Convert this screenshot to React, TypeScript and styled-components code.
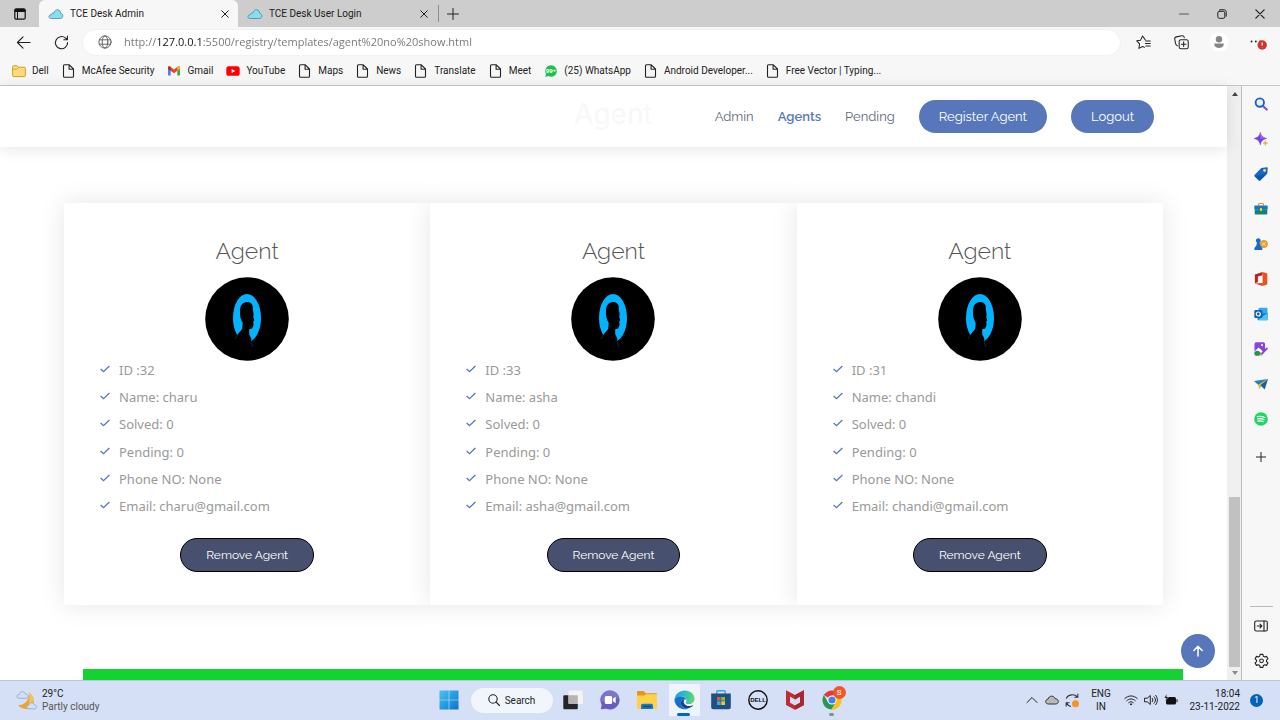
import React from "react";
import styled, { createGlobalStyle, css } from "styled-components";

const ui = 'Roboto, "Open Sans", sans-serif';
const heading = 'Raleway, Lato, sans-serif';
const blue = "#5777ba";

const GlobalStyle = createGlobalStyle`
  *, *::before, *::after { box-sizing: border-box; }
  body { margin: 0; font-family: "Open Sans", sans-serif; background: #fff; }
  button { font: inherit; color: inherit; background: none; border: 0; padding: 0; cursor: pointer; }
  a { color: inherit; text-decoration: none; }
  svg { display: block; flex: none; }
`;

const Desktop = styled.div`
  min-height: 100vh;
  display: flex;
  flex-direction: column;
`;

/* ---------- browser chrome ---------- */

const TabStrip = styled.div`
  display: flex;
  height: 27px;
  padding-right: 1px;
  background: #cdcdcd;
  color: #1b1b1b;
  font: 10px/14px ${ui};
`;

const TabActions = styled.button`
  width: 39px;
  display: grid;
  place-items: center;
`;

const Tab = styled.div<{ $active?: boolean }>`
  flex: 0 1 199px;
  display: flex;
  align-items: center;
  gap: 6px;
  padding: 0 9px;
  border-radius: 6px 6px 0 0;
  background: ${(p) => (p.$active ? "#f7f7f7" : "transparent")};
`;

const TabTitle = styled.span`
  flex: 1;
  white-space: nowrap;
`;

const NewTab = styled.button`
  display: flex;
  align-items: center;
  gap: 8px;
  padding-left: 1px;
  &::before {
    content: "";
    width: 1px;
    height: 17px;
    background: #8c8c8c;
  }
`;

const WindowButtons = styled.div`
  margin-left: auto;
  display: flex;
`;

const WindowButton = styled.button`
  width: 38px;
  display: grid;
  place-items: center;
`;

const Toolbar = styled.div`
  display: flex;
  align-items: center;
  height: 30px;
  padding: 0 4px;
  background: #f7f7f7;
`;

const ToolButton = styled.button`
  width: 38px;
  height: 28px;
  display: grid;
  place-items: center;
`;

const AddressBar = styled.label`
  flex: 1;
  display: flex;
  align-items: center;
  gap: 12px;
  height: 25px;
  margin: 0 4px 0 3px;
  padding: 0 15px;
  border-radius: 13px;
  background: #fff;
  box-shadow: 0 0 2px rgba(0, 0, 0, 0.08);
`;

const AddressInput = styled.input`
  flex: 1;
  min-width: 0;
  border: 0;
  padding: 0;
  outline: 0;
  font: 11px/18px "Open Sans", sans-serif;
  color: #747474;
  -webkit-text-fill-color: transparent;
  background: linear-gradient(90deg, #747474 34px, #111 34px, #111 79px, #747474 79px);
  background-clip: text;
  -webkit-background-clip: text;
`;

const Bookmarks = styled.nav`
  display: flex;
  align-items: center;
  gap: 13px;
  height: 28px;
  padding: 0 0 1px 12px;
  background: #f7f7f7;
  font: 10px/14px ${ui};
  color: #222;
`;

const Bookmark = styled.a`
  display: flex;
  align-items: center;
  gap: 6px;
  white-space: nowrap;
`;

/* ---------- page area ---------- */

const Workspace = styled.div`
  flex: 1;
  display: flex;
  border-top: 1px solid #c6c6c6;
  background: #f7f7f7;
`;

const Page = styled.main`
  position: relative;
  flex: 1;
  min-width: 0;
  display: flex;
  flex-direction: column;
  background: #fff;
`;

const SiteHeader = styled.header`
  display: flex;
  align-items: center;
  justify-content: flex-end;
  height: 61px;
  padding-right: 73px;
  box-shadow: 0 2px 15px rgba(0, 0, 0, 0.1);
`;

const SectionTitle = styled.h2`
  margin: 0 62px 6px 0;
  font: 400 28px/32px Inter, sans-serif;
  color: #f7f8fa;
`;

const SiteNav = styled.nav`
  display: flex;
  align-items: center;
  gap: 24px;
  font: 13px/18px ${heading};
  color: #5f687b;
`;

const NavLink = styled.a<{ $active?: boolean }>`
  ${(p) => p.$active && css`color: ${blue}; font-weight: 600;`}
`;

const Pill = styled.a`
  display: grid;
  place-items: center;
  height: 33px;
  padding: 0 20px;
  border-radius: 17px;
  background: ${blue};
  color: #fff;
`;

const Agents = styled.section`
  display: grid;
  grid-template-columns: repeat(3, 1fr);
  padding: 56px 64px 64px;
`;

const Card = styled.article`
  display: flex;
  flex-direction: column;
  align-items: center;
  padding: 33px 36px;
  background: #fff;
  box-shadow: 0 0 25px rgba(0, 0, 0, 0.1);
`;

const CardTitle = styled.h3`
  margin: 0 0 11px;
  font: 300 23px/30px ${heading};
  color: #555;
`;

const Facts = styled.ul`
  align-self: stretch;
  display: flex;
  flex-direction: column;
  justify-content: space-between;
  min-height: 154px;
  margin: 0 0 23px;
  padding: 0;
  list-style: none;
  font: 13px/18px "Noto Sans", sans-serif;
  color: #999;
`;

const Fact = styled.li`
  display: flex;
  align-items: center;
  gap: 9px;
`;

const RemoveButton = styled.button`
  height: 34px;
  padding: 0 25px;
  border: 1px solid #000;
  border-radius: 17px;
  background: #47516f;
  color: #fff;
  font: 400 12px/18px ${heading};
`;

const Banner = styled.div`
  flex: 1;
  min-height: 11px;
  margin: 0 44px 0 83px;
  background: #15d233;
`;

const BackToTop = styled.a`
  position: absolute;
  right: 12px;
  bottom: 12px;
  width: 34px;
  height: 34px;
  display: grid;
  place-items: center;
  border-radius: 50%;
  background: ${blue};
`;

const Scrollbar = styled.div`
  width: 15px;
  display: flex;
  flex-direction: column;
  align-items: center;
  justify-content: space-between;
  padding: 6px 1px 5px 2px;
  background: #f0f0f0;
  border-right: 1px solid #bdbdbd;
`;

const Thumb = styled.div`
  width: 11px;
  height: 170px;
  margin: auto 0 4px;
  background: #c1c1c1;
`;

const Sidebar = styled.aside`
  width: 38px;
  display: flex;
  flex-direction: column;
  padding-bottom: 2px;
`;

const SideApps = styled.nav`
  display: flex;
  flex-direction: column;
  padding-bottom: 3px;
`;

const SideButton = styled.button`
  height: 35px;
  display: grid;
  place-items: center;
`;

const SideRule = styled.hr`
  width: 23px;
  margin: auto auto 1px;
  border: 0;
  border-top: 1px solid #bbb;
`;

/* ---------- taskbar ---------- */

const Taskbar = styled.footer`
  display: grid;
  grid-template-columns: 1fr auto 1fr;
  height: 40px;
  padding-bottom: 1px;
  border-top: 1px solid #b9c3da;
  background: #d5dff5;
  font: 10px/13px ${ui};
  color: #222;
`;

const Weather = styled.button`
  display: flex;
  align-items: center;
  gap: 5px;
  padding-left: 16px;
  text-align: left;
`;

const Muted = styled.span`
  display: block;
  color: #555;
`;

const Apps = styled.div`
  display: flex;
  align-items: center;
  padding-left: 1px;
`;

const AppButton = styled.button<{ $current?: boolean }>`
  position: relative;
  width: 37px;
  height: 38px;
  display: grid;
  place-items: center;
  ${(p) =>
    p.$current &&
    css`
      background: linear-gradient(#eef3fc, #eef3fc) center / 31px 32px no-repeat;
    `}
`;

const Running = styled.i<{ $wide?: boolean }>`
  position: absolute;
  bottom: 3px;
  left: calc(50% - ${(p) => (p.$wide ? "7px" : "3px")});
  width: ${(p) => (p.$wide ? "13px" : "5px")};
  height: 3px;
  border-radius: 2px;
  background: ${(p) => (p.$wide ? "#0067c0" : "#858a94")};
`;

const CountBadge = styled.span`
  position: absolute;
  right: 5px;
  top: 5px;
  width: 13px;
  height: 13px;
  border-radius: 50%;
  background: #f0562b;
  color: #fff;
  font: 8px/13px ${ui};
`;

const SearchButton = styled.button`
  display: flex;
  align-items: center;
  justify-content: center;
  gap: 5px;
  width: 82px;
  height: 25px;
  margin: 0 2px 0 3px;
  border-radius: 13px;
  background: #f1f5fc;
`;

const Tray = styled.div`
  display: flex;
  align-items: center;
  justify-content: flex-end;
  padding-right: 17px;
`;

const TrayButton = styled.button`
  width: 20px;
  height: 28px;
  display: grid;
  place-items: center;
`;

const Language = styled.button`
  width: 38px;
  margin-right: 1px;
`;

const Clock = styled.button`
  width: 59px;
  text-align: right;
`;

const Notice = styled.span`
  width: 13px;
  height: 13px;
  margin-left: 10px;
  border-radius: 50%;
  background: #0063b8;
  color: #fff;
  text-align: center;
  font: 9px/13px ${ui};
`;

/* ---------- drawings ---------- */

type LineProps = { size?: number; w?: number; color?: string; box?: number; children: React.ReactNode };

const Line = ({ size = 16, w = 1, color = "#222", box = 16, children }: LineProps) => (
  <svg width={size} height={size} viewBox={`0 0 ${box} ${box}`} fill="none" stroke={color} strokeWidth={w} strokeLinecap="round" strokeLinejoin="round" aria-hidden>
    {children}
  </svg>
);

const CloudIcon = () => (
  <svg width="16" height="12" viewBox="0 0 16 12" aria-hidden>
    <path d="M3.2 10.5C1.4 10.5.8 9.3 1 8.3c.2-1 1.200-1.600 2.200-1.500C3.300 5.500 4.800 4.600 6 5.100 6.500 2.600 8 1.500 9.800 1.800c2 .3 2.900 1.900 2.800 3.400 1.700.3 2.500 1.700 2.200 3.100-.3 1.400-1.200 2.200-2.600 2.200Z" fill="#86def2" stroke="#4b8b9e" strokeWidth=".8" />
  </svg>
);

const CloseIcon = ({ size = 8 }: { size?: number }) => (
  <Line size={size} box={8} w={1}><path d="M.7.7l6.600 6.600M7.300.7.7 7.300" /></Line>
);

const DocIcon = () => (
  <svg width="14" height="14" viewBox="0 0 14 14" fill="none" stroke="#222" strokeWidth="1.100" strokeLinejoin="round" aria-hidden>
    <path d="M2.500.8h4.800L11.500 5v7.200c0 .6-.4 1-1 1h-8c-.6 0-1-.4-1-1V1.800c0-.6.4-1 1-1ZM7.100 1v4.200h4.400" />
  </svg>
);

const FolderIcon = () => (
  <svg width="14" height="14" viewBox="0 0 14 14" aria-hidden>
    <path d="M.6 3c0-.8.5-1.300 1.200-1.300h3l1.600 1.500h5.800c.7 0 1.200.5 1.200 1.200v7c0 .8-.5 1.200-1.200 1.200H1.800c-.7 0-1.200-.4-1.200-1.200Z" fill="#ffdc7a" stroke="#c99616" strokeWidth=".9" />
    <path d="M.8 5.200h4l1.500-1.500" fill="none" stroke="#c99616" strokeWidth=".8" />
  </svg>
);

const GmailIcon = () => (
  <svg width="14" height="14" viewBox="0 0 14 14" aria-hidden>
    <path d="M1 4v7.500h2.700V6Z" fill="#4285f4" />
    <path d="M13 4v7.500h-2.700V6Z" fill="#34a853" />
    <path d="M1 3.800C1 2.400 2.500 2 3.400 2.700L7 5.500l3.600-2.800C11.500 2 13 2.400 13 3.800v1L7 9.200 1 4.800Z" fill="#ea4335" />
    <path d="M10.300 3v3.800L13 4.800v-1C13 2.400 11.300 2.200 10.300 3Z" fill="#fbbc04" />
    <path d="M3.700 3v3.800L1 4.800v-1C1 2.400 2.700 2.200 3.700 3Z" fill="#c5221f" />
  </svg>
);

const YoutubeIcon = () => (
  <svg width="14" height="14" viewBox="0 0 14 14" aria-hidden>
    <rect x=".3" y="2.200" width="13.400" height="9.600" rx="2.600" fill="#f00" />
    <path d="M5.700 5v4l3.500-2Z" fill="#fff" />
  </svg>
);

const WhatsappIcon = () => (
  <svg width="14" height="14" viewBox="0 0 14 14" aria-hidden>
    <path d="M7 1.200a5.800 5.800 0 1 1-2.700 10.900L1.200 13l.8-3A5.800 5.800 0 0 1 7 1.200Z" fill="#1fc04d" />
    <text x="7" y="9.200" fontSize="6" fontWeight="700" fontFamily="Open Sans" fill="#fff" textAnchor="middle">99+</text>
  </svg>
);

const Avatar = () => (
  <svg width="84" height="84" viewBox="0 0 84 84" role="img" aria-label="Agent photo">
    <circle cx="42" cy="42" r="41.800" fill="#000" />
    <ellipse cx="42" cy="41" rx="14" ry="24" fill="#03b3ff" />
    <path d="M35 35c-.5-6 2.500-10 7.500-10 4.500 0 5.800 4 5.300 7l.8 5-.3 3 1 3.200-1 1 .2 4-1.300 3.200-3 .8v5l2.200 4.500-.7 3.500 1.800 4.800L44 74H22l4.500-12 5.200-3.500 5.500-6.500.5-6C36 43 34.700 39 35 35Z" fill="#000" />
    <path d="m30 62 2-3.500M46 64l1.800 6" stroke="#063a78" strokeWidth=".7" />
  </svg>
);

const CheckIcon = () => (
  <svg width="10" height="10" viewBox="0 0 10 10" fill="none" stroke={blue} strokeWidth="1.300" aria-hidden>
    <path d="M.6 4 3.500 6.700 9.400 1" />
  </svg>
);

const sideIcons: { name: string; art: React.ReactNode }[] = [
  {
    name: "Search",
    art: (
      <>
        <path d="m9 9 3.700 3.500" stroke="#8457d8" strokeWidth="2.400" strokeLinecap="round" />
        <circle cx="5.800" cy="5.600" r="4.200" fill="#e3f3ff" stroke="#1b62c4" strokeWidth="1.900" />
      </>
    ),
  },
  {
    name: "Discover",
    art: (
      <>
        <path d="M6.300.2C7.300 4 8.500 5.300 12.800 6.500 8.500 7.700 7.300 9 6.300 13 5.300 9 4.200 7.700 0 6.500 4.200 5.300 5.300 4 6.300.2Z" fill="#7440e8" stroke="#7440e8" strokeWidth=".4" />
        <path d="M6.300.4C7.100 4 8.200 5.300 12.400 6.500L6.300 6.500Z" fill="#b15df0" />
        <path d="M11.300 8.600c.4 1.700.8 2.100 2.500 2.500-1.700.5-2.100.9-2.500 2.600-.4-1.700-.8-2.100-2.500-2.600 1.700-.4 2.100-.8 2.500-2.500Z" fill="#edac22" stroke="#edac22" strokeWidth=".4" />
      </>
    ),
  },
  {
    name: "Shopping",
    art: (
      <>
        <path d="M.5 8 7.300.9 12.700.3c.7 0 1 .3 1 1L13.300 6.500l-7 6.900c-.6.5-1.200.4-1.700-.1L.5 9.300c-.4-.5-.4-.9 0-1.300Z" fill="#1768c5" />
        <path d="M.5 9.200 13.300 6.400l-7 7c-.6.5-1.200.4-1.700-.1Z" fill="#0e4999" opacity=".6" />
        <circle cx="10.600" cy="3.500" r="1.400" fill="#f4d86a" />
      </>
    ),
  },
  {
    name: "Tools",
    art: (
      <>
        <path d="M4.500 3.800V2.500c0-.7.4-1 1-1h3c.6 0 1 .3 1 1v1.300" fill="none" stroke="#c99b28" strokeWidth="1.100" />
        <rect x=".3" y="3.600" width="13.400" height="4" rx=".8" fill="#1774c8" />
        <path d="M.7 7.300h12.600v4.200c0 .6-.4 1-1 1H1.700c-.6 0-1-.4-1-1Z" fill="#16836e" />
        <rect x="6" y="6" width="2" height="3" rx=".5" fill="#f4cd46" />
      </>
    ),
  },
  {
    name: "Games",
    art: (
      <>
        <circle cx="9.900" cy="7" r="4" fill="#e3a12e" />
        <path d="m8 5.500 3.500 3m0-3-3.500 3" stroke="#fff0ad" strokeWidth=".8" />
        <path d="M4.200 1.200a2.300 2.300 0 0 1 1.500 4.200l.6 3.200 2 2.500V13H.4v-1.900l2-2.500L2.900 5.400a2.300 2.300 0 0 1 1.300-4.200Z" fill="#176ac6" />
      </>
    ),
  },
  {
    name: "Office",
    art: (
      <>
        <path d="M8.600 0 .9 2.600v8.800l3-1.400V4.400l4.700-1.200Z" fill="#b7251b" />
        <path d="m8.600 0 4.700 1.400v11.200L8.600 14Z" fill="#f0501f" />
        <path d="M8.600 14 .9 11.400l7.700-.5Z" fill="#d43c20" />
      </>
    ),
  },
  {
    name: "Outlook",
    art: (
      <>
        <rect x="4.500" y=".8" width="9" height="9" rx="1" fill="#36a9ee" />
        <path d="M3.500 6.500 13.600 6v6.200c0 .6-.4 1-1 1H4.500c-.6 0-1-.4-1-1Z" fill="#1381d4" />
        <path d="M4 12.900 13.600 6v6.200c0 .6-.4 1-1 1Z" fill="#54c5f2" />
        <rect x=".3" y="3" width="8" height="8" rx="1" fill="#0b63b7" />
        <circle cx="4.300" cy="7" r="2" fill="none" stroke="#fff" strokeWidth="1.200" />
      </>
    ),
  },
  {
    name: "Image editor",
    art: (
      <>
        <rect x=".5" y=".3" width="10.500" height="10" rx="1.500" fill="#8b43dc" />
        <path d="M.5 9.600 4.600 5.600l4.400 4L6.500 11Z" fill="#fff" />
        <path d="M.3 10.400c2.700-2.800 4.700-2 7.200 1.200L5 13.700H2c-1.200 0-1.700-1-1.700-3.300Z" fill="#1d9659" />
        <circle cx="8" cy="3" r="1" fill="#fff" />
        <path d="m6.500 12 6.200-6.800 1.300 1.200-6.200 6.800Z" fill="#8942d5" />
        <path d="m4.600 13.700 1.700-2.500 2 1.700c-.7.900-2.500 1-3.700.8Z" fill="#f0a52c" />
      </>
    ),
  },
  {
    name: "Drop",
    art: (
      <>
        <path d="M0 4 14 2 4.300 8Z" fill="#287fbf" />
        <path d="M4.300 8 14 2 5 12.300Z" fill="#e7b436" />
        <path d="M6.400 8.200 14 2l-3.300 10.600Z" fill="#155f9e" />
      </>
    ),
  },
  {
    name: "Spotify",
    art: (
      <>
        <circle cx="7" cy="7" r="6.800" fill="#1ed760" />
        <path d="M3.300 4.700c2.700-.7 5.100-.4 7.600.8M3.600 7c2.400-.6 4.400-.3 6.500.7M3.900 9.200c2-.5 3.700-.2 5.300.6" fill="none" stroke="#fff" strokeWidth="1.200" strokeLinecap="round" />
      </>
    ),
  },
];

const WeatherIcon = () => (
  <svg width="21" height="21" viewBox="0 0 21 21" aria-hidden>
    <path d="M13 2.200c6 4.500 6.500 11.600 1.300 15.200-4 2.800-10 1.600-12.200-2.600 5.800 1.200 11.500-4.500 10.900-12.600Z" fill="#f0a32f" />
    <path d="M13 2.200c3 2.300 4.600 5.500 4.700 8.500l-5 3.500c1.200-3 .8-8 .3-12Z" fill="#f7c554" />
    <path d="M3.200 8.200C-.2 8 .7 4.200 3.200 4.500 3.700 1 8.700.8 9.500 4.100c3.500-.1 3.300 4.200.3 4.200Z" fill="#cfe1f9" stroke="#7da5da" strokeWidth=".8" />
    <path d="M13 18.800c-3.200 0-2.600-3.700-.2-3.500.5-3.500 5.200-3.200 5.600-.2 3 .2 2.800 3.700.2 3.700Z" fill="#cfe1f9" stroke="#84a9d8" strokeWidth=".8" />
  </svg>
);

const StartIcon = () => (
  <svg width="20" height="20" viewBox="0 0 20 20" aria-hidden>
    <defs>
      <linearGradient id="win" x1="0" y1="0" x2="1" y2="1" gradientUnits="objectBoundingBox">
        <stop offset="0" stopColor="#4ac4f4" /><stop offset="1" stopColor="#0874cc" />
      </linearGradient>
    </defs>
    <path d="M.5.500h9.200v9.200H.5ZM10.300.500h9.200v9.200h-9.200ZM.5 10.300h9.200v9.200H.5ZM10.300 10.300h9.200v9.200h-9.200Z" fill="url(#win)" />
  </svg>
);

const TaskViewIcon = () => (
  <svg width="20" height="20" viewBox="0 0 20 20" aria-hidden>
    <rect x=".3" y="5.300" width="14.500" height="14" rx="1" fill="#252525" />
    <rect x="5.500" y=".6" width="14.300" height="13.500" rx="1" fill="#f3f3f3" />
    <path d="M5.500 5.300h9.300v8.800H6.500c-.6 0-1-.4-1-1Z" fill="#b4b4b4" />
  </svg>
);

const ChatIcon = () => (
  <svg width="20" height="20" viewBox="0 0 20 20" aria-hidden>
    <path d="M10 .5a9.500 9.500 0 1 1-3.800 18.200L.8 19.300l.9-4.500A9.500 9.500 0 0 1 10 .5Z" fill="#675cc4" />
    <path d="M10 .5a9.500 9.500 0 0 1 9.300 7.500L1 12A9.500 9.500 0 0 1 10 .5Z" fill="#8985d6" opacity=".6" />
    <rect x="4.800" y="6" width="7.400" height="8" rx="1.500" fill="#fff" />
    <path d="m13 8.800 2.700-2v6.400l-2.700-2Z" fill="#fff" />
  </svg>
);

const ExplorerIcon = () => (
  <svg width="20" height="20" viewBox="0 0 20 20" aria-hidden>
    <path d="M0 2.200C0 1.500.5 1 1.200 1h5.500l2.200 2.200h9.800c.8 0 1.300.5 1.300 1.300v5H0Z" fill="#dd9c17" />
    <path d="M0 5.600h7.200L9 4.300h11v13.400c0 .8-.5 1.300-1.300 1.300H1.300C.5 19 0 18.500 0 17.700Z" fill="#ffd04a" />
    <path d="M4 19v-3.500c0-1 .7-1.700 1.700-1.700h8.600c1 0 1.700.7 1.700 1.700V19Z" fill="#1979c6" />
    <path d="M6 16.500h8" stroke="#0b4a84" strokeWidth="1.500" />
  </svg>
);

const EdgeIcon = () => (
  <svg width="21" height="21" viewBox="0 0 24 24" aria-hidden>
    <defs>
      <linearGradient id="edgeTop" x1="0" y1=".4" x2="1" y2=".5">
        <stop offset="0" stopColor="#229fe0" /><stop offset=".55" stopColor="#30bfc2" /><stop offset="1" stopColor="#62dc62" />
      </linearGradient>
    </defs>
    <path d="M.5 11C1.300 4.500 6.300.5 12.300.5 19 .5 23.500 5.300 23.500 10c0 3.800-2.900 6-6.200 6-2.500 0-3.800-.8-3.800-1.500 0-.6.9-1 .9-2.700 0-2.300-2-4.300-5-4.300C5.800 7.500 2 9 .5 11Z" fill="url(#edgeTop)" />
    <path d="M.5 11c1-2 3.800-3.700 7.300-3.700 3.800 0 6.500 2.200 6.600 4.600-.5-.9-1.500-1.400-2.500-1.400-2.200 0-4 1.900-4 4.500 0 4.300 4.300 7.200 8.800 6A11.500 11.500 0 0 1 .5 11Z" fill="#1670c6" />
    <path d="M7.900 15c0 3.200 2.800 6 6.500 6.100 3 0 5.800-1.300 7.400-3.300.3-.4 0-.6-.4-.4-4 2-8.400.6-9.800-2-.8-1.500-.6-3.700.7-4.900-2.500 0-4.400 1.800-4.400 4.500Z" fill="#134391" />
  </svg>
);

const StoreIcon = () => (
  <svg width="20" height="20" viewBox="0 0 20 20" aria-hidden>
    <path d="M5.800 4V1.800c0-.6.4-1 1-1h6.400c.6 0 1 .4 1 1V4" fill="none" stroke="#31a7df" strokeWidth="1.400" />
    <path d="M.2 3.500h19.600v13.700c0 1.200-.8 2-2 2H2.200c-1.200 0-2-.8-2-2Z" fill="#1b4f86" />
    <path d="M6 7h3.700v3.700H6Z" fill="#ef5130" /><path d="M10.300 7H14v3.700h-3.700Z" fill="#84bd34" />
    <path d="M6 11.300h3.700V15H6Z" fill="#31aee8" /><path d="M10.300 11.300H14V15h-3.700Z" fill="#fbc02e" />
  </svg>
);

const DellIcon = () => (
  <svg width="20" height="20" viewBox="0 0 20 20" aria-hidden>
    <circle cx="10" cy="10" r="9.200" fill="none" stroke="#111" strokeWidth="1.400" />
    <text x="10" y="12.200" fontFamily="Liberation Sans" fontSize="6" fontWeight="700" textAnchor="middle" fill="#111">DELL</text>
  </svg>
);

const McafeeIcon = () => (
  <svg width="20" height="20" viewBox="0 0 20 20" aria-hidden>
    <path d="M1 .3 10 5l9-4.700v14.800L10 19.700l-9-4.600ZM5 6.600v6.200l5 2.700 5-2.700V6.600l-5 2.800Z" fill="#c02b34" />
    <path d="M10 5l9-4.700v14.800L10 19.700v-4.200l5-2.700V6.600l-5 2.800Z" fill="#a8272f" />
  </svg>
);

const ChromeIcon = () => (
  <svg width="20" height="20" viewBox="0 0 20 20" aria-hidden>
    <path d="M10 10 1.800 5.100A9.600 9.600 0 0 1 18.400 5.500H10Z" fill="#e33b2e" />
    <path d="M10 10 18.400 5.500A9.600 9.600 0 0 1 9.300 19.600L14 12Z" fill="#fbc116" />
    <path d="M10 10l-.7 9.600A9.600 9.600 0 0 1 1.800 5.100L6 12.200Z" fill="#269a49" />
    <path d="m6 12.200 3.300 7.400 4.500-7.400Z" fill="#269a49" />
    <circle cx="10" cy="10" r="4.600" fill="#fff" /><circle cx="10" cy="10" r="3.600" fill="#3f83ef" />
  </svg>
);

/* ---------- data ---------- */

const bookmarks: [string, React.ReactNode][] = [
  ["Dell", <FolderIcon />],
  ["McAfee Security", <DocIcon />],
  ["Gmail", <GmailIcon />],
  ["YouTube", <YoutubeIcon />],
  ["Maps", <DocIcon />],
  ["News", <DocIcon />],
  ["Translate", <DocIcon />],
  ["Meet", <DocIcon />],
  ["(25) WhatsApp", <WhatsappIcon />],
  ["Android Developer...", <DocIcon />],
  ["Free Vector | Typing...", <DocIcon />],
];

const agents = [
  { id: 32, name: "charu" },
  { id: 33, name: "asha" },
  { id: 31, name: "chandi" },
];

const AgentCard = ({ id, name }: { id: number; name: string }) => {
  const facts = [`ID :${id}`, `Name: ${name}`, "Solved: 0", "Pending: 0", "Phone NO: None", `Email: ${name}@gmail.com`];
  return (
    <Card>
      <CardTitle>Agent</CardTitle>
      <Avatar />
      <Facts>
        {facts.map((fact) => (
          <Fact key={fact}><CheckIcon />{fact}</Fact>
        ))}
      </Facts>
      <RemoveButton type="button">Remove Agent</RemoveButton>
    </Card>
  );
};

export default function App() {
  return (
    <Desktop>
      <GlobalStyle />
      <TabStrip>
        <TabActions aria-label="Tab actions">
          <svg width="12" height="12" viewBox="0 0 12 12" aria-hidden>
            <rect x=".8" y=".8" width="10.400" height="10.400" rx="1.500" fill="none" stroke="#111" strokeWidth="1.200" />
            <path d="M.8 1h10.400v3H.8Z" fill="#111" /><path d="M3.500 4v7" stroke="#111" />
          </svg>
        </TabActions>
        <Tab $active>
          <CloudIcon /><TabTitle>TCE Desk Admin</TabTitle>
          <button aria-label="Close TCE Desk Admin"><CloseIcon /></button>
        </Tab>
        <Tab>
          <CloudIcon /><TabTitle>TCE Desk User Login</TabTitle>
          <button aria-label="Close TCE Desk User Login"><CloseIcon /></button>
        </Tab>
        <NewTab aria-label="New tab">
          <Line size={12} box={12}><path d="M6 .5v11M.5 6h11" /></Line>
        </NewTab>
        <WindowButtons>
          <WindowButton aria-label="Minimise"><Line size={10} box={10} color="#555"><path d="M.5 5h9" /></Line></WindowButton>
          <WindowButton aria-label="Restore">
            <Line size={10} box={10}><rect x=".8" y="2.300" width="7" height="7" rx="1.500" /><path d="M2.700.8h4.500c1.200 0 2 .8 2 2v4.500" /></Line>
          </WindowButton>
          <WindowButton aria-label="Close"><CloseIcon size={10} /></WindowButton>
        </WindowButtons>
      </TabStrip>

      <Toolbar>
        <ToolButton aria-label="Back"><Line size={15} w={1.2}><path d="M15 8H1.500M7.500 2 1.500 8l6 6" /></Line></ToolButton>
        <ToolButton aria-label="Refresh"><Line size={15} w={1.2}><path d="M14.500 8A6.500 6.500 0 1 1 12.300 3.300L14.300 5M14.300 1.200V5h-3.800" /></Line></ToolButton>
        <AddressBar>
          <Line size={14} color="#555"><circle cx="8" cy="8" r="7" /><ellipse cx="8" cy="8" rx="3.200" ry="7" /><path d="M1.600 5.500h12.800M1.600 10.500h12.800" /></Line>
          <AddressInput aria-label="Address" defaultValue="http://127.0.0.1:5500/registry/templates/agent%20no%20show.html" />
        </AddressBar>
        <ToolButton aria-label="Favourites">
          <Line size={15} w={1.1}><path d="M10 5.300 7 1 4.900 5.500.8 6.200l3 3.300-.7 4.800L7 12.200l2 1M10.500 6.300h4.700M10 9h5.200M10.500 11.700h4.700" /></Line>
        </ToolButton>
        <ToolButton aria-label="Collections">
          <Line size={15} w={1.1}><rect x="5.500" y="5" width="9.700" height="9.700" rx="2" /><path d="M10.300 7.300v5M7.800 9.800h5M3.600 11.500C2 11 1.800 10 1.600 9L.8 4.300C.6 3 1.200 2.300 2.500 2L8.500.9c1.400-.2 2.200.5 2.500 2" /></Line>
        </ToolButton>
        <ToolButton aria-label="Profile">
          <svg width="20" height="20" viewBox="0 0 20 20" aria-hidden>
            <circle cx="10" cy="10" r="9.500" fill="#fff" /><circle cx="10" cy="7.300" r="3.200" fill="#858585" />
            <path d="M5.300 11.600h9.400c.3 3-2 4.400-4.700 4.400s-5-1.400-4.700-4.400Z" fill="#858585" />
          </svg>
        </ToolButton>
        <ToolButton aria-label="Settings and more">
          <svg width="20" height="16" viewBox="0 0 20 16" aria-hidden>
            <path d="M4.500 7.500h.1M8.800 7.500h.1M13 7.500h.1" stroke="#222" strokeWidth="1.800" strokeLinecap="round" />
            <circle cx="15.200" cy="11" r="4.700" fill="#d0342c" /><path d="M15.200 8.500v3M15.200 13.200v.3" stroke="#fff" strokeWidth="1.200" />
          </svg>
        </ToolButton>
      </Toolbar>

      <Bookmarks aria-label="Bookmarks">
        {bookmarks.map(([label, icon]) => (
          <Bookmark key={label} href="#">{icon}{label}</Bookmark>
        ))}
      </Bookmarks>

      <Workspace>
        <Page>
          <SiteHeader>
            <SectionTitle>Agent</SectionTitle>
            <SiteNav>
              <NavLink href="#">Admin</NavLink>
              <NavLink href="#" $active>Agents</NavLink>
              <NavLink href="#">Pending</NavLink>
              <Pill href="#">Register Agent</Pill>
              <Pill href="#">Logout</Pill>
            </SiteNav>
          </SiteHeader>
          <Agents>
            {agents.map((agent) => <AgentCard key={agent.id} {...agent} />)}
          </Agents>
          <Banner />
          <BackToTop href="#" aria-label="Back to top">
            <Line size={14} box={14} w={1.5} color="#fff"><path d="M7 12V2.500M2.800 6.500 7 2.300l4.200 4.200" /></Line>
          </BackToTop>
        </Page>
        <Scrollbar>
          <svg width="6" height="4" viewBox="0 0 6 4" aria-hidden><path d="M0 4 3 0l3 4Z" fill="#444" /></svg>
          <Thumb />
          <svg width="6" height="4" viewBox="0 0 6 4" aria-hidden><path d="M0 0l3 4 3-4Z" fill="#888" /></svg>
        </Scrollbar>
        <Sidebar>
          <SideApps aria-label="Sidebar apps">
            {sideIcons.map(({ name, art }) => (
              <SideButton key={name} aria-label={name}>
                <svg width="14" height="14" viewBox="0 0 14 14" aria-hidden>{art}</svg>
              </SideButton>
            ))}
          </SideApps>
          <SideButton aria-label="Customise sidebar"><Line size={10} box={10}><path d="M5 .3v9.400M.3 5h9.400" /></Line></SideButton>
          <SideRule />
          <SideButton aria-label="Hide sidebar">
            <Line size={14} box={14} w={1.1}><rect x=".7" y="2" width="12.600" height="10" rx="1.500" /><path d="M10 2v10M3.200 7h4.500M6 5.200 7.800 7 6 8.800" /></Line>
          </SideButton>
          <SideButton aria-label="Sidebar settings">
            <Line size={15} box={24} w={1.7}>
              <path d="m9.700 2.200-.6 3-2.200 1.200-2.900-1-2.300 4 2.300 2v2.400l-2.300 2 2.300 4 2.900-1 2.200 1.200.6 3h4.600l.6-3 2.200-1.200 2.900 1 2.300-4-2.300-2v-2.400l2.300-2-2.300-4-2.900 1-2.200-1.200-.6-3Z" />
              <circle cx="12" cy="12.500" r="3" />
            </Line>
          </SideButton>
        </Sidebar>
      </Workspace>

      <Taskbar>
        <Weather>
          <WeatherIcon />
          <span>29°C<Muted>Partly cloudy</Muted></span>
        </Weather>
        <Apps>
          <AppButton aria-label="Start"><StartIcon /></AppButton>
          <SearchButton>
            <Line size={12} box={12} w={1.1}><circle cx="5" cy="5" r="4.200" /><path d="m8 8 3.500 3.500" /></Line>
            Search
          </SearchButton>
          <AppButton aria-label="Task view"><TaskViewIcon /></AppButton>
          <AppButton aria-label="Chat"><ChatIcon /></AppButton>
          <AppButton aria-label="File Explorer"><ExplorerIcon /></AppButton>
          <AppButton aria-label="Edge" $current><EdgeIcon /><Running $wide /></AppButton>
          <AppButton aria-label="Store"><StoreIcon /></AppButton>
          <AppButton aria-label="Dell"><DellIcon /></AppButton>
          <AppButton aria-label="McAfee"><McafeeIcon /></AppButton>
          <AppButton aria-label="Chrome"><ChromeIcon /><CountBadge>S</CountBadge><Running /></AppButton>
        </Apps>
        <Tray>
          <TrayButton aria-label="Hidden icons"><Line size={12} box={12}><path d="m1 8.500 5-5 5 5" /></Line></TrayButton>
          <TrayButton aria-label="OneDrive">
            <svg width="14" height="12" viewBox="0 0 14 12" aria-hidden>
              <path d="M3.500 10C1.700 10 .7 9 .7 7.600S1.800 5.300 3 5.200C3.400 3.300 4.900 2.200 6.600 2.200c1.800 0 3 1 3.500 2.500 1.900 0 3.200 1.100 3.200 2.700S12.200 10 10.500 10Z" fill="#b9b9b9" stroke="#333" />
            </svg>
          </TrayButton>
          <TrayButton aria-label="Updates">
            <svg width="15" height="15" viewBox="0 0 15 15" aria-hidden>
              <path d="M1.200 5.500C3 1.200 9.500.6 12.500 4M12.800.8v3.500H9.400M6 13.500C4 13.200 2.500 12 1.600 10M1.200 13.500V9.800h3.300" fill="none" stroke="#333" strokeWidth="1.100" />
              <circle cx="10.500" cy="10.800" r="3.500" fill="#f7941d" />
            </svg>
          </TrayButton>
          <Language>ENG<br />IN</Language>
          <TrayButton aria-label="Wi-Fi">
            <Line size={14} box={14}><path d="M.8 5.500c3.800-3.500 8.600-3.500 12.400 0M2.700 7.700c2.600-2.400 6-2.400 8.600 0M4.700 9.700c1.500-1.300 3.100-1.300 4.600 0" /><circle cx="7" cy="11.300" r=".6" fill="#222" /></Line>
          </TrayButton>
          <TrayButton aria-label="Volume">
            <Line size={14} box={14}><path d="M.8 5.200h2.400L6.300 2.500v9L3.200 8.800H.8ZM8.200 5.200c1 1 1 2.600 0 3.600M10 3.700c2 1.900 2 4.700 0 6.600M11.700 2.300c2.300 2.500 2.300 6.900 0 9.400" /></Line>
          </TrayButton>
          <TrayButton aria-label="Battery">
            <svg width="14" height="12" viewBox="0 0 14 12" aria-hidden>
              <rect x="2" y="3" width="10" height="7.500" rx="1.500" fill="#111" /><path d="M12.500 5.200h1v3h-1Z" fill="#111" />
              <path d="M2.700 0 .2 4h2l-.8 3L4.600 3H2.700Z" fill="#111" stroke="#d5dff5" strokeWidth=".4" />
            </svg>
          </TrayButton>
          <Clock>18:04<br />23-11-2022</Clock>
          <Notice>1</Notice>
        </Tray>
      </Taskbar>
    </Desktop>
  );
}
